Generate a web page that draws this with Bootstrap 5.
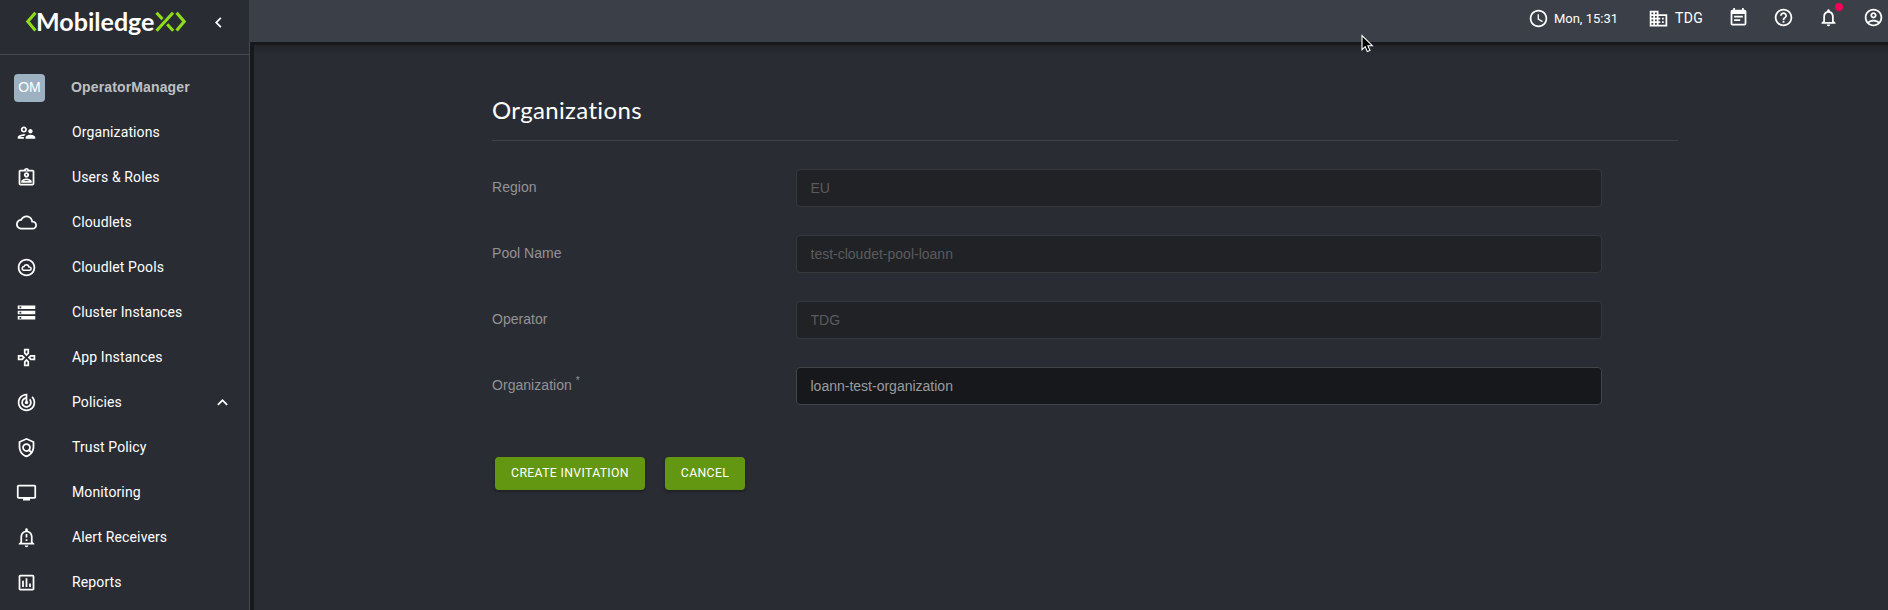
<!DOCTYPE html>
<html lang="en">
<head>
<meta charset="utf-8">
<title>Organizations</title>
<link href="https://cdn.jsdelivr.net/npm/bootstrap@5.3.0/dist/css/bootstrap.min.css" rel="stylesheet">
<style>
  body { background: #292c33; color: #fff; font-family: Roboto, "Liberation Sans", sans-serif; font-size: 14px; }
  svg { fill: currentColor; display: block; flex: none; }
  .ico { width: 21px; height: 21px; }
  .side { width: 249px; flex: none; }
  .brand { height: 55px; border-bottom: 1px solid #46484c; padding: 0 0 0 25px; }
  .brand-logo { margin-top: -9px; }
  .collapse-ico { margin: -9px 0 0 19px; }
  .side-list { padding-top: 10px; }
  .side-row { height: 45px; padding-left: 16px; color: #fff; letter-spacing: .12px; text-decoration: none; }
  .side-row .ico { margin-right: 35px; }
  .side-row .chev { margin-right: 16px; }
  .user-row { padding-left: 14px; letter-spacing: 0; font-family: "Liberation Sans", sans-serif; }
  .avatar { width: 31px; height: 28px; border-radius: 4px; background: #9cb2c3; margin-right: 26px; font-size: 14px; }
  .user-name { color: #bfc0c2; letter-spacing: .14px; }
  .topbar { height: 42px; background: #3b3f47; }
  .topbar-info { margin-top: 8px; }
  .topbar-actions { margin: 7px 4px 0 0; }
  .clock-text { font-family: Roboto, sans-serif; font-size: 13px; margin: 1px 30px 0 5px; }
  .org-text { letter-spacing: .3px; margin: 0 25px 0 6px; }
  .dot { position: absolute; width: 8px; height: 8px; border-radius: 50%; background: #f50057; left: 17px; top: -4px; }
  .content-area { border-left: 1px solid #46484c; box-shadow: inset 4px 3px 0 #17181c; background: linear-gradient(#222428 3px, #292c33 13px); }
  .form-area { margin: 51px 210px 0 242px; }
  .page-title { font-family: Lato, sans-serif; font-size: 24px; line-height: 34px; letter-spacing: .35px; padding-bottom: 13px; border-bottom: 1px solid #3f4248; margin: 0 0 28px; font-weight: 400; }
  .field-row { height: 38px; margin-bottom: 28px; font-family: "Liberation Sans", sans-serif; }
  .field-row label { width: 304px; flex: none; color: #929396; padding-bottom: 2px; letter-spacing: .04px; }
  .field-row label sup { font-size: 10px; top: -6px; }
  .field-row .form-control { width: 806px; flex: none; height: 38px; background: #17181c; border: 1px solid #444548; border-radius: 4px; color: #9b9c9f; font-size: 14px; padding: 0 13.5px; }
  .field-row .form-control:disabled { background: #212226; border-color: #36383b; color: #5a5b5f; opacity: 1; }
  .form-actions { margin: 52px 0 0 3px; gap: 20px; }
  .action { height: 33px; border: 0; border-radius: 4px; background: #649711; color: #fff; font-size: 12.25px; letter-spacing: .35px; padding: 0 0 1px; box-shadow: 0 2px 3px rgba(0,0,0,.3); }
  .action:hover { background: #557f10; color: #fff; }
  .action-wide { width: 150px; }
  .action-short { width: 80px; }
  .pointer { position: absolute; left: 1361px; top: 34px; }
</style>
</head>
<body>
<div class="d-flex vh-100 overflow-hidden position-relative">
  <nav class="side d-flex flex-column">
    <div class="brand d-flex align-items-center">
      <svg class="brand-logo" width="164" height="34" viewBox="0 0 164 34">
        <g fill="none" stroke="#8fdc1b" stroke-width="3.1">
          <path d="M10.4 6.7 2.8 15.6l7.6 8.9"/>
          <path d="M131.5 24.7 148 6.7M131.5 6.7l6 6.4M142.2 18.3l6 6.4"/>
          <path d="M151.6 6.7l7.6 8.9-7.6 8.9"/>
        </g>
        <text x="11" y="24.7" font-family="Lato, sans-serif" font-weight="700" font-size="24" textLength="118.5" lengthAdjust="spacingAndGlyphs" fill="#fff">Mobiledge</text>
      </svg>
      <svg class="ico collapse-ico" viewBox="0 0 24 24"><path d="M15.41 7.41 14 6l-6 6 6 6 1.41-1.41L10.83 12z"/></svg>
    </div>
    <div class="side-list d-flex flex-column">
      <div class="side-row user-row d-flex align-items-center"><span class="avatar d-flex align-items-center justify-content-center">OM</span><span class="user-name fw-bold">OperatorManager</span></div>
      <a class="side-row d-flex align-items-center"><svg class="ico" viewBox="0 0 24 24"><path d="M9 12c1.93 0 3.5-1.57 3.5-3.5S10.93 5 9 5 5.5 6.57 5.5 8.5 7.07 12 9 12zm0-5c.83 0 1.5.67 1.5 1.5S9.83 10 9 10s-1.5-.67-1.5-1.5S8.17 7 9 7zm.05 10H4.77c.99-.5 2.7-1 4.23-1 .11 0 .23.01.34.01.34-.73.93-1.33 1.64-1.81-.73-.13-1.42-.2-1.98-.2-2.34 0-7 1.17-7 3.5V19h7v-1.5c0-.17.02-.34.05-.5zm7.45-2.5c-1.84 0-5.5 1.01-5.5 3V19h11v-1.5c0-1.99-3.66-3-5.5-3zm1.21-1.82c.76-.43 1.29-1.24 1.29-2.18C19 9.12 17.88 8 16.5 8S14 9.12 14 10.5c0 .94.53 1.75 1.29 2.18.36.2.77.32 1.21.32s.85-.12 1.21-.32z"/></svg>Organizations</a>
      <a class="side-row d-flex align-items-center"><svg class="ico" viewBox="0 0 24 24"><path fill-rule="evenodd" d="M19 3h-4.18C14.4 1.84 13.3 1 12 1s-2.4.84-2.82 2H5c-1.1 0-2 .9-2 2v14c0 1.1.9 2 2 2h14c1.1 0 2-.9 2-2V5c0-1.1-.9-2-2-2zm0 16H5V5h14v14zM12 2.75a.75.75 0 1 1 0 1.5.75.75 0 0 1 0-1.5z"/><path d="M12 12c1.65 0 3-1.35 3-3s-1.35-3-3-3-3 1.35-3 3 1.35 3 3 3zm0-4c.55 0 1 .45 1 1s-.45 1-1 1-1-.45-1-1 .45-1 1-1zm6 8.58c0-2.5-3.97-3.58-6-3.58s-6 1.08-6 3.58V18h12v-1.42zM8.48 16c.74-.51 2.23-1 3.52-1 1.3 0 2.8.49 3.52 1H8.48z"/></svg>Users &amp; Roles</a>
      <a class="side-row d-flex align-items-center"><svg class="ico" viewBox="0 0 24 24"><path d="M19.35 10.04C18.67 6.59 15.64 4 12 4 9.11 4 6.6 5.64 5.35 8.04 2.34 8.36 0 10.91 0 14c0 3.31 2.69 6 6 6h13c2.76 0 5-2.24 5-5 0-2.64-2.05-4.78-4.65-4.96zM19 18H6c-2.21 0-4-1.79-4-4 0-2.05 1.53-3.76 3.56-3.97l1.07-.11.5-.95C8.08 7.14 9.94 6 12 6c2.62 0 4.88 1.86 5.39 4.43l.3 1.5 1.53.11c1.56.1 2.78 1.41 2.78 2.96 0 1.65-1.35 3-3 3z"/></svg>Cloudlets</a>
      <a class="side-row d-flex align-items-center"><svg class="ico" viewBox="0 0 24 24"><path d="M12 2C6.48 2 2 6.48 2 12s4.48 10 10 10 10-4.48 10-10S17.52 2 12 2zm0 18c-4.41 0-8-3.59-8-8s3.59-8 8-8 8 3.59 8 8-3.59 8-8 8z"/><path fill="none" stroke="currentColor" stroke-width="1.8" d="M8.6 15.2h6.7a1.9 1.9 0 0 0 .1-3.8h-.6a2.9 2.9 0 0 0-5.6-.5 2.2 2.2 0 0 0-.6 4.3z"/></svg>Cloudlet Pools</a>
      <a class="side-row d-flex align-items-center"><svg class="ico" viewBox="0 0 24 24"><path d="M2 20h20v-4H2v4zm2-3h2v2H4v-2zM2 4v4h20V4H2zm4 3H4V5h2v2zm-4 7h20v-4H2v4zm2-3h2v2H4v-2z"/></svg>Cluster Instances</a>
      <a class="side-row d-flex align-items-center"><svg class="ico" viewBox="0 0 24 24"><path d="M13 4v2.67l-1 1-1-1V4h2m7 7v2h-2.67l-1-1 1-1H20M6.67 11l1 1-1 1H4v-2h2.67M12 16.33l1 1V20h-2v-2.67l1-1M15 2H9v5.5l3 3 3-3V2zm7 7h-5.5l-3 3 3 3H22V9zM7.5 9H2v6h5.5l3-3-3-3zm4.5 4.5l-3 3V22h6v-5.5l-3-3z"/></svg>App Instances</a>
      <a class="side-row d-flex align-items-center"><svg class="ico" viewBox="0 0 24 24"><path d="M19.07 4.93l-1.41 1.41C19.1 7.79 20 9.79 20 12c0 4.42-3.58 8-8 8s-8-3.58-8-8c0-4.08 3.05-7.44 7-7.93v2.02C8.16 6.57 6 9.03 6 12c0 3.31 2.69 6 6 6s6-2.69 6-6c0-1.66-.67-3.16-1.76-4.24l-1.41 1.41C15.55 9.9 16 10.9 16 12c0 2.21-1.79 4-4 4s-4-1.79-4-4c0-1.86 1.28-3.41 3-3.86v2.14c-.6.35-1 .98-1 1.72 0 1.1.9 2 2 2s2-.9 2-2c0-.74-.4-1.38-1-1.72V2h-1C6.48 2 2 6.48 2 12s4.48 10 10 10 10-4.48 10-10c0-2.76-1.12-5.26-2.93-7.07z"/></svg><span class="flex-grow-1">Policies</span><svg class="ico chev" viewBox="0 0 24 24"><path d="M12 8l-6 6 1.41 1.41L12 10.83l4.59 4.58L18 14z"/></svg></a>
      <a class="side-row d-flex align-items-center"><svg class="ico" viewBox="0 0 24 24"><path d="M12 1L3 5v6c0 5.55 3.84 10.74 9 12 5.16-1.26 9-6.45 9-12V5l-9-4zm7 10c0 1.85-.51 3.65-1.38 5.21l-1.45-1.45c1.29-1.94 1.07-4.58-.64-6.29-1.95-1.95-5.12-1.95-7.07 0-1.95 1.95-1.95 5.12 0 7.07 1.71 1.71 4.35 1.92 6.29.64l1.72 1.72c-1.19 1.42-2.73 2.51-4.47 3.04-4.02-1.25-7-5.42-7-9.94V6.3l7-3.11 7 3.11V11zm-7 4c-1.66 0-3-1.34-3-3s1.34-3 3-3 3 1.34 3 3-1.34 3-3 3z"/></svg>Trust Policy</a>
      <a class="side-row d-flex align-items-center"><svg class="ico" viewBox="0 0 24 24"><path d="M21 3H3c-1.1 0-2 .9-2 2v12c0 1.1.9 2 2 2h5v2h8v-2h5c1.1 0 1.99-.9 1.99-2L23 5c0-1.1-.9-2-2-2zm0 14H3V5h18v12z"/></svg>Monitoring</a>
      <a class="side-row d-flex align-items-center"><svg class="ico" viewBox="0 0 24 24"><path fill-rule="evenodd" d="M10 21h4c0 1.1-.9 2-2 2s-2-.9-2-2zm9-4v-6c0-3.35-2.36-6.15-5.5-6.83V3c0-.83-.67-1.5-1.5-1.5s-1.5.67-1.5 1.5v1.17C7.36 4.85 5 7.65 5 11v6l-2 2v1h18v-1l-2-2zm-2 1H7v-7c0-2.76 2.24-5 5-5s5 2.24 5 5v7z"/><path d="M11 8h2v4h-2zM11 14h2v2h-2z"/></svg>Alert Receivers</a>
      <a class="side-row d-flex align-items-center"><svg class="ico" viewBox="0 0 24 24"><path fill-rule="evenodd" d="M19 3H5c-1.1 0-2 .9-2 2v14c0 1.1.9 2 2 2h14c1.1 0 2-.9 2-2V5c0-1.1-.9-2-2-2zm0 16H5V5h14v14z"/><path d="M7 10h2v7H7zM11 7h2v10h-2zM15 13h2v4h-2z"/></svg>Reports</a>
    </div>
  </nav>

  <div class="flex-grow-1 d-flex flex-column">
    <header class="topbar d-flex justify-content-end align-items-start flex-shrink-0">
      <div class="topbar-info d-flex align-items-center">
        <svg class="ico" viewBox="0 0 24 24"><path d="M11.99 2C6.47 2 2 6.48 2 12s4.47 10 9.99 10C17.52 22 22 17.52 22 12S17.52 2 11.99 2zM12 20c-4.42 0-8-3.58-8-8s3.58-8 8-8 8 3.58 8 8-3.58 8-8 8zm.5-13H11v6l5.25 3.15.75-1.23-4.5-2.67z"/></svg>
        <span class="clock-text">Mon, 15:31</span>
        <svg class="ico" viewBox="0 0 24 24"><path fill-rule="evenodd" d="M12 7V3H2v18h20V7H12zM6 19H4v-2h2v2zm0-4H4v-2h2v2zm0-4H4V9h2v2zm0-4H4V5h2v2zm4 12H8v-2h2v2zm0-4H8v-2h2v2zm0-4H8V9h2v2zm0-4H8V5h2v2zm10 12h-8v-2h2v-2h-2v-2h2v-2h-2V9h8v10zm-2-8h-2v2h2v-2zm0 4h-2v2h2v-2z"/></svg>
        <span class="org-text">TDG</span>
      </div>
      <div class="topbar-actions d-flex gap-4">
        <svg class="ico" viewBox="0 0 24 24"><path fill-rule="evenodd" d="M19 3h-1V1h-2v2H8V1H6v2H5c-1.11 0-1.99.9-1.99 2L3 19c0 1.1.89 2 2 2h14c1.1 0 2-.9 2-2V5c0-1.1-.9-2-2-2zm0 16H5V8h14v11z"/><path d="M7 10h10v2H7zM7 14h7v2H7z"/></svg>
        <svg class="ico" viewBox="0 0 24 24"><path d="M11 18h2v-2h-2v2zm1-16C6.48 2 2 6.48 2 12s4.48 10 10 10 10-4.48 10-10S17.52 2 12 2zm0 18c-4.41 0-8-3.59-8-8s3.59-8 8-8 8 3.59 8 8-3.59 8-8 8zm0-14c-2.21 0-4 1.79-4 4h2c0-1.1.9-2 2-2s2 .9 2 2c0 2-3 1.75-3 5h2c0-2.25 3-2.5 3-5 0-2.21-1.79-4-4-4z"/></svg>
        <span class="position-relative"><svg class="ico" viewBox="0 0 24 24"><path d="M12 22c1.1 0 2-.9 2-2h-4c0 1.1.9 2 2 2zm6-6v-5c0-3.07-1.63-5.64-4.5-6.32V4c0-.83-.67-1.5-1.5-1.5s-1.5.67-1.5 1.5v.68C7.64 5.36 6 7.92 6 11v5l-2 2v1h16v-1l-2-2zm-2 1H8v-6c0-2.48 1.51-4.5 4-4.5s4 2.02 4 4.5v6z"/></svg><span class="dot"></span></span>
        <svg class="ico" viewBox="0 0 24 24"><path d="M12 2C6.48 2 2 6.48 2 12s4.48 10 10 10 10-4.48 10-10S17.52 2 12 2zM7.07 18.28c.43-.9 3.05-1.78 4.93-1.78s4.51.88 4.93 1.78C15.57 19.36 13.86 20 12 20s-3.57-.64-4.93-1.72zm11.29-1.45c-1.43-1.74-4.9-2.33-6.36-2.33s-4.93.59-6.36 2.33C4.62 15.49 4 13.82 4 12c0-4.41 3.59-8 8-8s8 3.59 8 8c0 1.82-.62 3.49-1.64 4.83zM12 6c-1.94 0-3.5 1.56-3.5 3.5S10.06 13 12 13s3.5-1.56 3.5-3.5S13.94 6 12 6zm0 5c-.83 0-1.5-.67-1.5-1.5S11.17 8 12 8s1.5.67 1.5 1.5S12.83 11 12 11z"/></svg>
      </div>
    </header>
    <main class="content-area flex-grow-1">
      <form class="form-area">
        <h1 class="page-title">Organizations</h1>
        <div class="field-row d-flex align-items-center"><label for="region">Region</label><input id="region" class="form-control" value="EU" disabled></div>
        <div class="field-row d-flex align-items-center"><label for="pool">Pool Name</label><input id="pool" class="form-control" value="test-cloudet-pool-loann" disabled></div>
        <div class="field-row d-flex align-items-center"><label for="operator">Operator</label><input id="operator" class="form-control" value="TDG" disabled></div>
        <div class="field-row d-flex align-items-center"><label for="org">Organization <sup>*</sup></label><input id="org" class="form-control" value="loann-test-organization"></div>
        <div class="form-actions d-flex">
          <button type="button" class="btn action action-wide">CREATE INVITATION</button>
          <button type="button" class="btn action action-short">CANCEL</button>
        </div>
      </form>
    </main>
  </div>
  <svg class="pointer" width="14" height="20" viewBox="0 0 14 20"><path d="M1 1.5v14.2l3.2-3 2.1 4.9 2.7-1.1-2.1-4.8h4.4z" fill="#000" stroke="#fff" stroke-width="1.1"/></svg>
</div>
<script src="https://cdn.jsdelivr.net/npm/bootstrap@5.3.0/dist/js/bootstrap.bundle.min.js"></script>
</body>
</html>
